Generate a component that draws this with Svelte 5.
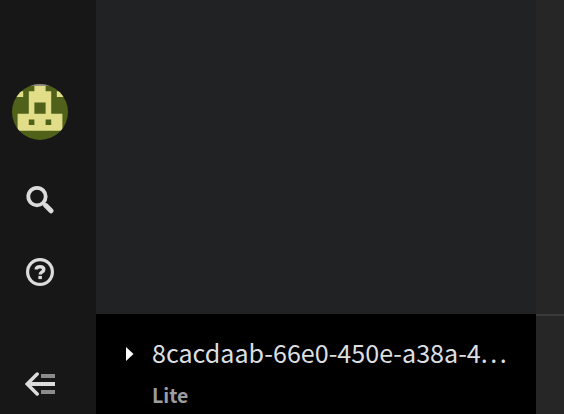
<script>
  const name = '8cacdaab-66e0-450e-a38a-4';
</script>

<div class="app">
  <nav class="rail">
    <button class="avatar" aria-label="Profile">
      <svg width="56" height="56" viewBox="0 0 56 56">
        <defs><clipPath id="round"><circle cx="28" cy="28" r="28" /></clipPath></defs>
        <g clip-path="url(#round)">
          <rect width="56" height="56" fill="#50611a" />
          <g fill="#e2dd88">
            <path d="M22.4 1.3H33.6V7.3H39.2V29.8H50.4V46.7H5.6V29.8H16.8V7.3H22.4Z" />
            <path d="M5.6 7.3H11.2V12.9H0V1.7H5.6ZM50.4 7.3H44.8V12.9H56V1.7H50.4Z" />
          </g>
          <rect width="56" height="1.8" fill="#85858a" />
          <path fill="#50611a" d="M22.4 18.6H33.6V29.8H22.4ZM16.8 35.5H22.4V41.1H16.8ZM33.6 35.5H39.2V41.1H33.6Z" />
        </g>
      </svg>
    </button>
    <button class="search" aria-label="Search">
      <svg width="28" height="28" viewBox="0 0 28 28" fill="none" stroke="#dcdcdc">
        <circle cx="11" cy="10.6" r="8.7" stroke-width="3.8" />
        <path d="M17 17L19 19" stroke-width="3.4" />
        <path d="M19.8 19.6L25 24.8" stroke-width="5" stroke-linecap="round" />
      </svg>
    </button>
    <button class="help" aria-label="Help">
      <svg width="28" height="28" viewBox="0 0 28 28" fill="none" stroke="#dcdcdc">
        <circle cx="14" cy="14" r="12.4" stroke-width="3.2" />
        <path d="M10.2 11.6C10.2 9.6 11.8 8.7 14 8.7C16.3 8.7 17.8 9.6 17.8 11.5C17.8 14 14.2 13.8 14.2 16.6" stroke-width="3.4" />
        <path d="M12.4 17.9H15.9V21.1H12.4Z" fill="#dcdcdc" stroke="none" />
      </svg>
    </button>
    <button class="collapse" aria-label="Collapse menu">
      <svg width="30" height="24" viewBox="0 0 30 24" fill="none">
        <path d="M16 4H30M16 20H30" stroke="#8b8b8b" stroke-width="4" />
        <path d="M30 12H2.5" stroke="#dcdcdc" stroke-width="4" />
        <path d="M12.2 2L2.2 12L12.2 22" stroke="#dcdcdc" stroke-width="3.5" stroke-linecap="round" />
      </svg>
    </button>
  </nav>

  <section class="panel">
    <div class="blank"></div>
    <div class="entry">
      <svg class="caret" width="8" height="14" viewBox="0 0 8 14"><path d="M0 0L7.5 7L0 14Z" fill="#fff" /></svg>
      <div class="details">
        <div class="name">{name}<span class="more">...</span></div>
        <div class="plan">Lite</div>
      </div>
    </div>
  </section>

  <main class="content"><div class="rule"></div></main>
</div>

<style>
  :global(body) { margin: 0; background: #171717; }
  .app { display: flex; width: 564px; height: 414px; overflow: hidden; font-family: "Noto Sans CJK SC", "Noto Sans", sans-serif; }
  .rail { box-sizing: border-box; width: 96px; padding: 84px 0 0 12px; background: #171717; flex: none; }
  button { display: block; padding: 0; border: 0; background: none; }
  svg { display: block; }
  .search { margin: 46px 0 0 14px; }
  .help { margin: 44px 0 0 14px; }
  .collapse { margin: 86px 0 0 13px; }
  .panel { display: flex; flex-direction: column; width: 440px; flex: none; }
  .blank { height: 314px; background: #212223; }
  .entry { display: flex; flex: 1; background: #000; }
  .caret { margin: 33px 0 0 30px; flex: none; }
  .details { width: 364px; margin-left: 18px; padding-top: 18px; }
  .name { white-space: nowrap; font-size: 25.1px; line-height: 40px; color: #dcdee0; }
  .more { letter-spacing: 2.5px; }
  .plan { margin-top: 8px; font-size: 19.5px; line-height: 30px; font-weight: 700; color: #9b9da0; }
  .content { flex: 1; padding-top: 314px; background: #262626; }
  .rule { height: 2px; background: #393939; }
</style>
